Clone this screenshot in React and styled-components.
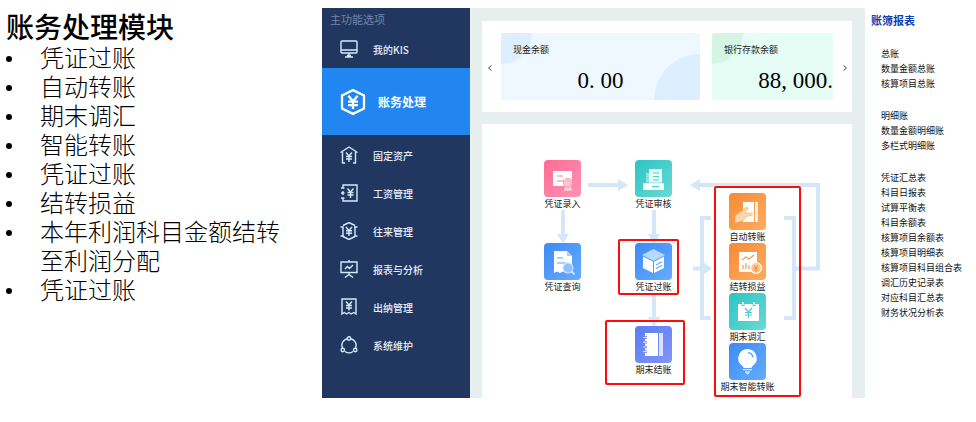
import React from 'react';
import styled, { createGlobalStyle, css } from 'styled-components'

const notes = [
  '凭证过账', '自动转账', '期末调汇', '智能转账',
  '凭证过账', '结转损益', '本年利润科目金额结转至利润分配', '凭证过账',
]

const reports = [
  ['总账', '数量金额总账', '核算项目总账'],
  ['明细账', '数量金额明细账', '多栏式明细账'],
  ['凭证汇总表', '科目日报表', '试算平衡表', '科目余额表', '核算项目余额表',
    '核算项目明细表', '核算项目科目组合表', '调汇历史记录表', '对应科目汇总表', '财务状况分析表'],
]

// menu icons, 18 x 18 line drawings
const menu = [
  { name: '我的KIS', icon: <><rect x="1" y="1" width="16" height="12" rx="1" /><path d="M1 10h16M9 13v4M5 17h8M7 15.500h4" /></> },
  { name: '账务处理', active: true, icon: <><path d="M9 .8l7.600 3.700v9L9 17.200l-7.600-3.700v-9z" /><path d="M5.800 4.600L9 8.400l3.200-3.800M5.600 8.800h6.800M5.600 11.200h6.800M9 8.400v5.400" /></> },
  { name: '固定资产', icon: <><path d="M.5 6.500L9 1l8.500 5.500M2.500 6V17H5M15.500 6v11H13" /><path d="M6 6.500l3 3.500 3-3.500M6 10.500h6M6 13h6M9 10v6" /></> },
  { name: '工资管理', icon: <><path d="M3 4V1h14v16H3v-3M3 7v4M1 4h3.500M1 9h3.500M1 14h3.500" /><path d="M7.500 4.500l3 3.500 3-3.500M7.500 8.500h6M7.500 11h6M10.500 8v6" /></> },
  { name: '往来管理', icon: <><path d="M3 3.500l6-3 6 3M3 14.500l6 3 6-3M.5 5H3v9M.5 14H4M17.500 14H15V5M17.500 5H14" /><path d="M6 5l3 3.500L12 5M6 8.800h6M6 11.200h6M9 8.500V14" /></> },
  { name: '报表与分析', icon: <><path d="M9 0v2M1 2h16v10.500H1zM9 12.500V15M9 14.500l-4 3M9 14.500l4 3" /><path d="M5 9l2.500-2.500 2 2L13 5" /></> },
  { name: '出纳管理', icon: <><path d="M2 16V1h14v15l-2.300-1.500L11.300 16 9 14.500 6.700 16l-2.400-1.500z" /><path d="M6 3.500L9 7l3-3.500M6 7.500h6M6 10h6M9 7v5.500" /></> },
  { name: '系统维护', icon: <><path d="M7 2.700A6.800 6.800 0 0 0 2.500 12M11 2.700a6.800 6.800 0 0 1 4.500 9.300M5 15.500a7 7 0 0 0 8 0" /><circle cx="9" cy="2.500" r="1.700" /><circle cx="2.800" cy="14" r="1.700" /><circle cx="15.200" cy="14" r="1.700" /></> },
]

const tones = {
  pink: ['#ff6b95', '#ff94b3'],
  teal: ['#2cc4c5', '#68dad4'],
  blue: ['#3d8af5', '#65acff'],
  indigo: ['#5b7df3', '#8194fb'],
  orange: ['#f68b35', '#ffac61'],
}

// node icons, 37 x 37 filled drawings
const nodes = [
  { name: '凭证录入', x: 62, y: 36, tone: 'pink', icon: <>
    <path d="M9 11h19v15H9z" fill="#fff" />
    <path d="M13 16h6M13 21h8" stroke="#ff7da2" />
    <path d="M21 26l-1 5 2.500-.7 1.500 1 1.500-1 2.500.7-1-5z" fill="#ffd0dd" />
    <circle cx="24" cy="23" r="4.600" fill="#ffc2d3" stroke="#ff7da2" strokeWidth=".7" /></> },
  { name: '凭证审核', x: 153, y: 36, tone: 'teal', icon: <>
    <path d="M11 13h4v10h-4z" fill="#8ce5de" /><path d="M14 9h13v15H14z" fill="#e9fffb" />
    <path d="M18 13h6M18 16.500h6M18 20h6" stroke="#4dccca" />
    <path d="M8 23h21v7H8z" fill="#fff" /><path d="M8 22.800h21" stroke="#4dccca" strokeWidth=".6" /><path d="M17 26.500h7" stroke="#4dccca" /></> },
  { name: '凭证查询', x: 62, y: 119, tone: 'blue', icon: <>
    <path d="M10 8h13l5 5v17l-3-1.500-3 1.500-3-1.500-3 1.500-3-1.500-3 1.500z" fill="#fff" />
    <path d="M23 8v5h5z" fill="#a8cfff" /><path d="M13 15h6M13 20h9" stroke="#5ea5ff" />
    <circle cx="24" cy="25" r="5" fill="#8ec1ff" stroke="#c9e1ff" /><path d="M27.500 28.500l3 3" stroke="#c9e1ff" strokeWidth="2" /></> },
  { name: '凭证过账', x: 153, y: 119, tone: 'blue', icon: <>
    <path d="M18.500 6L30 12l-11.500 6L7 12z" fill="#b6d9ff" />
    <path d="M8 13.500l10 5.200V30L8 25zM19 18.700l10-5.200V25l-10 5z" fill="#fff" />
    <path d="M21 22l6-3.200M21 25.500l6-3.200" stroke="#5ea5ff" /></> },
  { name: '期末结账', x: 153, y: 202, tone: 'indigo', icon: <>
    <path d="M10 7h13v23H10z" fill="#fff" /><path d="M24 7h4v23h-4z" fill="#dce2ff" />
    <path d="M8 11.500h4M8 16.200h4M8 21h4M8 25.700h4" stroke="#5f7af0" strokeWidth="2.500" />
    <path d="M8 11.500h4M8 16.200h4M8 21h4M8 25.700h4" stroke="#ffe1d2" /></> },
  { name: '自动转账', x: 247, y: 69, tone: 'orange', icon: <>
    <path d="M14 9h11v20H14z" fill="#fff" /><path d="M26 9h3v20h-3z" fill="#fff1df" />
    <path d="M6 23l5-4c2-1 3-2 5-4 2-1.500 4-.5 3 1l-3 4h6c2 0 2 2 0 2.500l-5 1c-1 3-3 5-6 5l-5 2z" fill="#ffd7ab" stroke="#f99b4d" strokeWidth=".5" /></> },
  { name: '结转损益', x: 247, y: 119, tone: 'orange', icon: <>
    <path d="M10 9h18v20H10z" fill="#fff" />
    <path d="M13 17l4-3 3 2 5-4M14 26v-4M17 26v-6M20 26v-4" stroke="#f99b4d" />
    <circle cx="27" cy="25" r="5.500" fill="#ffcb93" stroke="#fff" />
    <path d="M25 22l2 3 2-3M24.500 25h5M24.500 27h5M27 25v4" stroke="#f5852e" strokeWidth=".8" /></> },
  { name: '期末调汇', x: 247, y: 169, tone: 'teal', icon: <>
    <path d="M9 11h21v17H9z" fill="#fff" />
    <path d="M14 8v5M25 8v5" stroke="#4dccca" strokeWidth="3" /><path d="M14 9v3M25 9v3" stroke="#fff" strokeWidth="1.500" />
    <path d="M16 15l3.500 4 3.500-4M16 19.500h7M16 22h7M19.500 19v6" stroke="#4dccca" /></> },
  { name: '期末智能转账', x: 247, y: 219, tone: 'blue', icon: <>
    <path d="M18.500 6a9.300 9.300 0 0 0-6 16.300c1.500 1.200 2 2 2.200 2.700h7.600c.2-.7.7-1.500 2.200-2.700A9.300 9.300 0 0 0 18.500 6z" fill="#fff" />
    <path d="M19 9.500a6 6 0 0 1 5 5" stroke="#65a9ff" strokeWidth="1.500" />
    <path d="M14 26.700h9M16 28.800h5" stroke="#d8e9ff" /><path d="M17.500 30h2l-1 1z" stroke="#d8e9ff" /></> },
]

const marks = [
  { x: 136, y: 115, w: 61, h: 56 },
  { x: 123, y: 196, w: 80, h: 65 },
  { x: 232, y: 62, w: 87, h: 211 },
]

const Connectors = () => (
  <Lines viewBox="0 0 370 274" aria-hidden="true">
    <g fill="none" stroke="#d5e6f8" strokeWidth="4">
      <path d="M106 61h32M81 86v26M172 86v26M172 171v25" />
      <path d="M216 61h120v83.500H314" />
      <path d="M229 94h-9v100h9M302 94h10v100H302M211 144.500h12" />
    </g>
    <path d="M136 55v12l10-6zM75 110h12l-6 10zM166 110h12l-6 10zM166 193h12l-6 10zM218 55v12l-10-6zM221 138v13l9-6.500z" fill="#d5e6f8" />
  </Lines>
)

const App = () => {
  return (
    <Page>
      <GlobalStyle />
      <Notes>
        <h1>账务处理模块</h1>
        <ul>
          {notes.map((note, i) => <li key={i}>{note}</li>)}
        </ul>
      </Notes>

      <Workspace>
        <Sidebar>
          <SidebarTitle>主功能选项</SidebarTitle>
          {menu.map(item => (
            <MenuItem href="#" key={item.name} $active={item.active}>
              <svg viewBox="0 0 18 18">{item.icon}</svg>
              {item.name}
            </MenuItem>
          ))}
        </Sidebar>

        <Main>
          <Balances>
            <Arrow type="button" aria-label="上一个"><svg viewBox="0 0 6 8"><path d="M4.500 1.500L1.500 4l3 2.500" /></svg></Arrow>
            <Balance $grow={199}>
              <h2>现金余额</h2>
              <p>0. 00</p>
            </Balance>
            <Balance $grow={121} $green>
              <h2>银行存款余额</h2>
              <p>88, 000.</p>
            </Balance>
            <Arrow type="button" aria-label="下一个"><svg viewBox="0 0 6 8"><path d="M1.500 1.500l3 2.500-3 2.500" /></svg></Arrow>
          </Balances>

          <Flow>
            <Canvas>
              <Connectors />
              {nodes.map(node => (
                <Node type="button" key={node.name} $x={node.x} $y={node.y} $tone={tones[node.tone]}>
                  <svg viewBox="0 0 37 37" fill="none" strokeWidth="1.200">{node.icon}</svg>
                  {node.name}
                </Node>
              ))}
              {marks.map(m => <Mark key={m.x} $x={m.x} $y={m.y} $w={m.w} $h={m.h} />)}
            </Canvas>
          </Flow>
        </Main>

        <Reports>
          <h2>账簿报表</h2>
          {reports.map((group, i) => (
            <ul key={i}>
              {group.map(name => <li key={name}><a href="#">{name}</a></li>)}
            </ul>
          ))}
        </Reports>
      </Workspace>
    </Page>
  )
}

export default App

const GlobalStyle = createGlobalStyle`
* {
    box-sizing: border-box;
}

body {
    margin: 0;
    background: #fff;
    color: #000;
    font-family: 'Noto Sans CJK SC', sans-serif;
}

h1, h2, p, ul {
    margin: 0;
    padding: 0;
}

a {
    color: inherit;
    text-decoration: none;
}

button {
    padding: 0;
    border: 0;
    background: none;
    color: inherit;
    font-family: inherit;
    cursor: pointer;
}
`

const Page = styled.div`
display: grid;
grid-template-columns: 33% 1fr;
align-items: start;
`

const Notes = styled.section`
padding: 13px 30px 0 6px;
font-family: 'Liberation Sans', 'Noto Sans CJK SC', sans-serif;

    h1 {
        font-size: 28px;
        font-weight: 500;
        line-height: 31px;
    }

    ul {
        list-style: none;
    }

    li {
        display: flex;
        font-size: 24px;
        font-weight: 300;
        line-height: 29px;
    }

    li::before {
        content: '';
        flex: none;
        width: 6px;
        height: 6px;
        margin: 12px 28px 0 0;
        border-radius: 50%;
        background: #000;
    }
`

const Workspace = styled.section`
display: grid;
grid-template-columns: 148px 1fr 111px;
margin-top: 8px;
`

const Sidebar = styled.nav`
background: #21375f;
color: #e3efff;
`

const SidebarTitle = styled.h2`
padding-left: 8px;
color: #7386aa;
font-size: 11px;
font-weight: 400;
line-height: 22px;
`

const MenuItem = styled.a`
display: flex;
align-items: center;
gap: 15px;
height: 38px;
padding-left: 18px;
font-size: 10px;
font-weight: 500;

    svg {
        width: 18px;
        height: 18px;
        fill: none;
        stroke: #d5e8ff;
        stroke-width: 1.4;
    }

    ${({ $active }) => $active && css`
        gap: 12px;
        height: 67px;
        margin-bottom: 1px;
        background: #2186f0;
        color: #fff;
        font-size: 12px;
        font-weight: 700;

        svg {
            width: 26px;
            height: 28px;
            stroke: #fff;
            stroke-width: 1.6;
        }
    `}
`

const Main = styled.main`
display: flex;
flex-direction: column;
gap: 12px;
padding: 13px 13px 0 12px;
background: #e7efee;
`

const Balances = styled.section`
display: flex;
gap: 12px;
padding: 12px 0;
background: #fff;
`

const Arrow = styled.button`
flex: none;
width: 19px;

    &:first-child {
        margin-right: -12px;
        padding-right: 4px;
    }

    &:last-child {
        margin-left: -12px;
        padding-left: 4px;
    }

    svg {
        width: 6px;
        height: 8px;
        fill: none;
        stroke: #444;
    }
`

const Balance = styled.div`
position: relative;
flex: ${({ $grow }) => $grow} 1 0;
min-width: 0;
height: 67px;
overflow: hidden;
border-radius: 2px;
background: ${({ $green }) => ($green ? '#e6fdf5' : '#eff7ff')};

    &::before, &::after {
        content: '';
        position: absolute;
        border-radius: 50%;
        background: ${({ $green }) => ($green ? '#d4f5e4' : '#dceeff')};
    }

    &::before {
        top: -31px;
        left: -31px;
        width: 62px;
        height: 62px;
    }

    &::after {
        display: ${({ $green }) => ($green ? 'none' : 'block')};
        right: -46px;
        bottom: -46px;
        width: 92px;
        height: 92px;
    }

    h2 {
        position: relative;
        z-index: 1;
        padding: 8px 12px 0;
        color: #222;
        font-size: 9px;
        font-weight: 400;
        line-height: 18px;
    }

    p {
        position: relative;
        z-index: 1;
        padding-top: 9px;
        font-family: 'Liberation Serif', serif;
        font-size: 23px;
        line-height: 26px;
        text-align: ${({ $green }) => ($green ? 'right' : 'center')};
    }
`

const Flow = styled.section`
background: #fff;
`

const Canvas = styled.div`
position: relative;
width: 370px;
height: 274px;
`

const Lines = styled.svg`
display: block;
width: 370px;
height: 274px;
`

const Node = styled.button`
position: absolute;
left: ${({ $x }) => $x}px;
top: ${({ $y }) => $y}px;
display: flex;
flex-direction: column;
align-items: center;
width: 37px;
color: #222;
font-size: 9px;
line-height: 14px;
white-space: nowrap;

    svg {
        flex: none;
        width: 37px;
        height: 37px;
        border-radius: 4px;
        background: linear-gradient(135deg, ${({ $tone }) => $tone.join(', ')});
    }
`

const Mark = styled.div`
position: absolute;
left: ${({ $x }) => $x}px;
top: ${({ $y }) => $y}px;
width: ${({ $w }) => $w}px;
height: ${({ $h }) => $h}px;
border: 2px solid #fb0d0d;
border-radius: 2px;
pointer-events: none;
`

const Reports = styled.aside`
padding-left: 6px;
white-space: nowrap;

    h2 {
        margin-bottom: 14px;
        color: #0f40b0;
        font-size: 11px;
        font-weight: 700;
        line-height: 24px;
    }

    ul {
        padding-left: 10px;
        list-style: none;
        color: #111;
        font-size: 9px;
        line-height: 15px;
    }

    ul + ul {
        margin-top: 17px;
    }

    li {
        height: 15px;
    }
`
